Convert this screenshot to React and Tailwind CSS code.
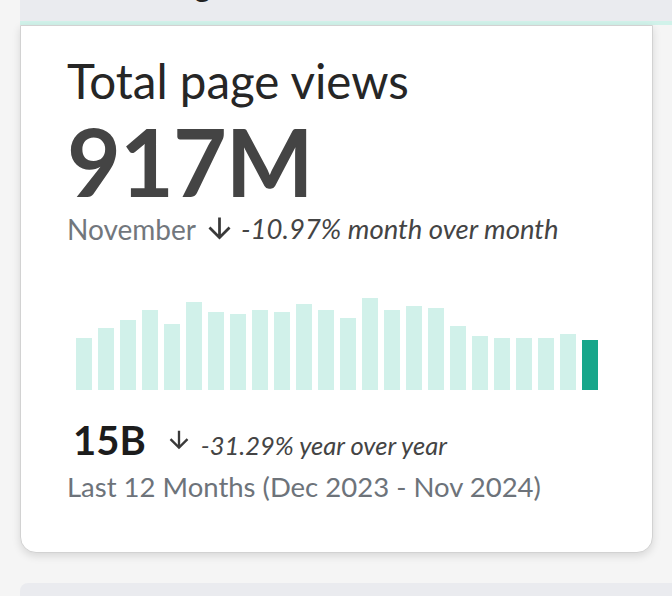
const bars = [52, 62, 70, 80, 66, 88, 78, 76, 80, 78, 86, 80, 72, 92, 80, 84, 82, 64, 54, 52, 52, 52, 56, 50];

// material "arrow_downward"
const DownArrow = ({ className }) => (
  <svg viewBox="0 0 24 24" className={className} fill="currentColor">
    <path d="M20 12l-1.41-1.41L13 16.17V4h-2v12.17l-5.58-5.59L4 12l8 8 8-8z" />
  </svg>
);

export default function App() {
  return (
    <div className="w-[672px] h-[596px] overflow-hidden bg-[#f5f5f5] pl-[20px] font-['Lato',sans-serif]">
      {/* previous section, cut off */}
      <div className="h-[25px] bg-[#eaebef] border-b-4 border-[#d1f2ea] overflow-hidden pl-[47px]">
        <div className="text-[32px] leading-none text-[#222] -mt-[32px] ml-[32px]">Reading</div>
      </div>

      {/* card */}
      <div className="mr-[19px] h-[528px] bg-white border border-[#d2d2d2] rounded-b-[16px] shadow-[0_3px_8px_rgba(0,0,0,0.12)] pl-[46px] pr-[40px] pt-[31px] flex flex-col">
        <div className="text-[47.5px] leading-none text-[#262626]">Total page views</div>
        <div className="text-[93px] leading-[88px] font-bold text-[#444] mt-[12px] tracking-[-1px]">917M</div>
        <div className="flex items-center h-[28px] mt-[10px] leading-none">
          <span className="text-[28px] text-[#72777d]">November</span>
          <DownArrow className="shrink-0 w-[33px] h-[33px] -my-[3px] ml-[7px] mr-[5px] text-[#3a3a3a]" />
          <span className="text-[27.5px] italic text-[#444]">-10.97% month over month</span>
        </div>

        {/* chart */}
        <div className="mt-[47px] h-[100px] flex items-end gap-[6px] pl-[9px]">
          {bars.map((h, i) => (
            <div
              key={i}
              className={i === bars.length - 1 ? 'w-[16px] bg-[#17a68a]' : 'w-[16px] bg-[#d1f1ea]'}
              style={{ height: `${h}px` }}
            />
          ))}
        </div>

        <div className="flex items-baseline mt-[30px] leading-none pl-[6px]">
          <span className="text-[40px] font-bold text-[#1c1c1c]">15B</span>
          <DownArrow className="self-center shrink-0 w-[28px] h-[28px] ml-[19px] mr-[8px] text-[#3a3a3a]" />
          <span className="text-[25.5px] italic text-[#444]">-31.29% year over year</span>
        </div>
        <div className="mt-[13px] text-[27.5px] leading-none text-[#6d737a]">Last 12 Months (Dec 2023 - Nov 2024)</div>
      </div>

      {/* next section */}
      <div className="mt-[30px] h-[40px] bg-[#eaebef] rounded-tl-[8px]" />
    </div>
  );
}
